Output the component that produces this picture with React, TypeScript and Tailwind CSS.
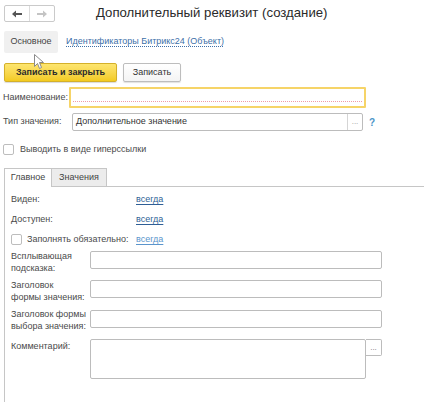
import React from "react";

const Link = ({ children, tone = "dark" }: { children: React.ReactNode; tone?: "dark" | "light" }) => (
  <span
    className={
      tone === "dark"
        ? "whitespace-nowrap text-[#2f5f96] underline decoration-[#2f5f96] underline-offset-2"
        : "whitespace-nowrap text-[#5b95cc] underline decoration-[#5b95cc] underline-offset-2"
    }
  >
    {children}
  </span>
);

const Checkbox = () => (
  <span className="inline-block w-[11px] h-[11px] border border-[#bdbdbd] rounded-[2px] bg-white shrink-0" />
);

export default function App() {
  return (
    <div
      className="relative w-[424px] h-[402px] bg-white overflow-hidden text-[9px] text-[#4a4a4a] flex flex-col whitespace-nowrap"
      style={{ fontFamily: '"Liberation Sans", Arial, sans-serif' }}
    >
      {/* header */}
      <div className="flex items-center pl-[4px] pt-[5px] h-[22px]">
        <div className="flex w-[51px] h-[17px] border border-[#cacaca] rounded-[2px] bg-white">
          <div className="w-[25px] h-full flex items-center justify-center border-r border-[#dcdcdc]">
            <svg width="10" height="8" viewBox="0 0 10 8">
              <path d="M0 4 L4 0.5 L4 3 L10 3 L10 5 L4 5 L4 7.5 Z" fill="#555" />
            </svg>
          </div>
          <div className="flex-1 h-full flex items-center justify-center">
            <svg width="10" height="8" viewBox="0 0 10 8">
              <path d="M10 4 L6 0.5 L6 3 L0 3 L0 5 L6 5 L6 7.5 Z" fill="#c4c4c4" />
            </svg>
          </div>
        </div>
        <div className="ml-[41px] text-[13.2px] text-[#2a2a2a] leading-none -mt-[1px]">
          Дополнительный реквизит (создание)
        </div>
      </div>

      {/* tabs of form */}
      <div className="flex items-center pl-[4px] mt-[9px] h-[22px]">
        <div className="w-[54px] h-[22px] bg-[#f0f0f0] rounded-[2px] flex items-center justify-center text-[#444]">
          Основное
        </div>
        <span className="ml-[8px] text-[#3d6fa8] underline decoration-dotted decoration-[#3d6fa8] underline-offset-2">
          Идентификаторы Битрикс24 (Объект)
        </span>
      </div>

      {/* buttons */}
      <div className="flex items-center pl-[4px] mt-[10px] h-[19px] gap-[6px]">
        <div className="w-[113px] h-[19px] rounded-[2px] border border-[#d4b02a] bg-gradient-to-b from-[#fde56e] to-[#f3cb1e] flex items-center justify-center font-bold text-[#2b2b2b] shadow-[0_1px_1px_rgba(0,0,0,0.15)]">
          Записать и закрыть
        </div>
        <div className="w-[58px] h-[19px] rounded-[2px] border border-[#bdbdbd] bg-gradient-to-b from-white to-[#f4f4f4] flex items-center justify-center text-[#333] shadow-[0_1px_1px_rgba(0,0,0,0.12)]">
          Записать
        </div>
      </div>

      {/* Наименование */}
      <div className="flex items-center pl-[3px] mt-[5px] h-[21px]">
        <div className="w-[66px]">Наименование:</div>
        <div className="w-[297px] h-[21px] border-2 border-[#f6d468] rounded-[1px] bg-white flex items-end px-[2px] pb-[4px]">
          <div className="w-full border-b border-dotted border-[#f09aa6]" />
        </div>
      </div>

      {/* Тип значения */}
      <div className="flex items-center pl-[3px] mt-[5px] h-[18px]">
        <div className="w-[69px]">Тип значения:</div>
        <div className="w-[291px] h-[18px] border border-[#bcbcbc] rounded-[2px] bg-white flex">
          <div className="flex-1 flex items-center pl-[3px] text-[#333]">Дополнительное значение</div>
          <div className="w-[15px] h-full border-l border-[#d5d5d5] flex items-center justify-center text-[#999] text-[8px]">
            ...
          </div>
        </div>
        <div className="ml-[6px] text-[#4b94c8] font-bold text-[10px]">?</div>
      </div>

      {/* checkbox hyperlink */}
      <div className="flex items-center pl-[3px] mt-[13px] h-[11px] gap-[6px]">
        <Checkbox />
        <span>Выводить в виде гиперссылки</span>
      </div>

      {/* tabs */}
      <div className="flex items-end pl-[4px] mt-[13px] h-[19px]">
        <div className="w-[48px] h-[19px] border border-b-0 border-[#c6c6c6] bg-white flex items-center justify-center text-[#444]">
          Главное
        </div>
        <div className="w-[55px] h-[19px] border border-l-0 border-[#c6c6c6] bg-[#ececec] flex items-center justify-center text-[#444]">
          Значения
        </div>
        <div className="flex-1 h-[19px] border-b border-[#c6c6c6]" />
      </div>

      {/* panel */}
      <div className="ml-[4px] flex-1 border-l border-[#c6c6c6] pl-[6px] pt-[3px] flex flex-col">
        <div className="flex items-center h-[20px]">
          <div className="w-[125px]">Виден:</div>
          <Link>всегда</Link>
        </div>
        <div className="flex items-center h-[20px]">
          <div className="w-[125px]">Доступен:</div>
          <Link>всегда</Link>
        </div>
        <div className="flex items-center h-[19px]">
          <Checkbox />
          <div className="w-[114px] pl-[5px]">Заполнять обязательно:</div>
          <Link tone="light">всегда</Link>
        </div>

        <div className="flex h-[29px] mt-[2px]">
          <div className="w-[79px] leading-[12px] -mt-[1px]">
            Всплывающая
            <br />
            подсказка:
          </div>
          <div className="w-[292px] h-[18px] border border-[#bcbcbc] rounded-[2px] bg-white" />
        </div>
        <div className="flex h-[30px]">
          <div className="w-[79px] leading-[12px] -mt-[1px]">
            Заголовок
            <br />
            формы значения:
          </div>
          <div className="w-[292px] h-[18px] border border-[#bcbcbc] rounded-[2px] bg-white" />
        </div>
        <div className="flex h-[29px]">
          <div className="w-[79px] leading-[12px] -mt-[2px]">
            Заголовок формы
            <br />
            выбора значения:
          </div>
          <div className="w-[292px] h-[18px] border border-[#bcbcbc] rounded-[2px] bg-white" />
        </div>
        <div className="flex">
          <div className="w-[79px] leading-[12px] pt-[1px]">Комментарий:</div>
          <div className="w-[276px] h-[40px] border border-[#bcbcbc] rounded-[2px] bg-white" />
          <div className="w-[16px] h-[17px] border border-l-0 border-[#bcbcbc] rounded-r-[2px] bg-white flex items-center justify-center text-[#777] text-[8px]">
            ...
          </div>
        </div>
      </div>

      {/* mouse cursor */}
      <svg className="absolute left-[34px] top-[54px]" width="11" height="16" viewBox="0 0 11 16">
        <path
          d="M0.5 0.5 L0.5 12.5 L3.5 9.5 L5.5 14.5 L7.5 13.5 L5.5 8.5 L9.5 8.5 Z"
          fill="#fff"
          stroke="#8a8a8a"
          strokeWidth="1"
          strokeLinejoin="round"
        />
      </svg>
    </div>
  );
}
